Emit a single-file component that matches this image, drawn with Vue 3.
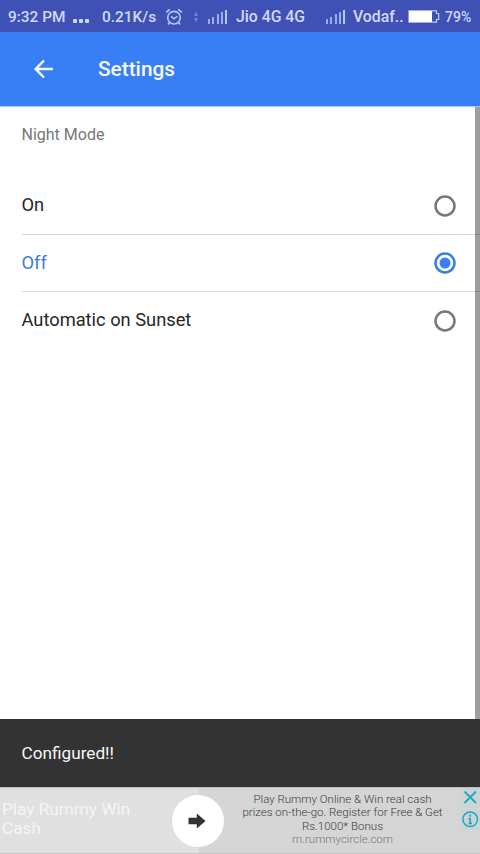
<script setup>
import { ref } from 'vue'

const options = ['On', 'Off', 'Automatic on Sunset']
const selected = ref('Off')
const bars = [5, 7, 10, 12, 14]
</script>

<template>
  <div class="screen">
    <div class="status">
      <span class="time">9:32 PM</span>
      <span class="dots"><i></i><i></i><i></i></span>
      <span class="speed">0.21K/s</span>
      <svg class="alarm" width="18" height="18" viewBox="0 0 18 18" fill="none" stroke="#b9c5f3">
        <circle cx="9" cy="9.7" r="6.3" stroke-width="1.6" />
        <path d="M1.2 4.4 4.8 1.3M13.2 1.3l3.6 3.1M4.5 14.5 3 16.5M13.5 14.5l1.5 2" stroke-width="1.7" />
        <path d="m6.2 8.4 2.8 2.5 3.3-2.5" stroke-width="1.5" />
      </svg>
      <svg class="data" width="6" height="14" viewBox="0 0 6 14" fill="#7582d5">
        <path d="M3 1.500 5 6H1zM3 12.500 1 8h4z" />
      </svg>
      <span class="signal"><i v-for="h in bars" :key="h" :style="{ height: h + 'px' }"></i></span>
      <span class="carrier">Jio 4G 4G</span>
      <span class="signal"><i v-for="h in bars" :key="h" :style="{ height: h + 'px' }"></i></span>
      <span class="carrier-two">Vodaf..</span>
      <svg class="battery" width="32" height="13" viewBox="0 0 32 13">
        <path d="M1 .8h27.500v2.700h2.200v6h-2.200v2.700H1z" fill="none" stroke="#c2cdf7" stroke-width="1.2" />
        <path d="M1 1h23v11H1z" fill="#fff" />
      </svg>
      <span class="percent">79%</span>
    </div>
    <header class="toolbar">
      <svg width="20" height="20" viewBox="0 0 20 20" fill="none" stroke="#f5f9ff" stroke-width="2.500">
        <path d="M19 10H2.500M10 1.500 1.700 10l8.300 8.500" />
      </svg>
      <h1>Settings</h1>
    </header>
    <main class="content">
      <div class="panel">
        <h2>Night Mode</h2>
        <div
          v-for="option in options"
          :key="option"
          class="option"
          :class="{ active: option === selected }"
          @click="selected = option"
        >
          <span>{{ option }}</span>
          <svg class="radio" width="22" height="22" viewBox="0 0 22 22">
            <circle class="ring" cx="11" cy="11" r="9.500" />
            <circle v-if="option === selected" class="dot" cx="11" cy="11" r="5.500" />
          </svg>
        </div>
      </div>
      <div class="scrollbar"></div>
    </main>
    <div class="toast">Configured!!</div>
    <div class="ad">
      <div class="ad-title">Play Rummy Win<br />Cash</div>
      <div class="ad-go">
        <svg width="18" height="16" viewBox="0 0 18 16" fill="#333"><path d="M.5 4.700h8.300V.5L17.500 8l-8.700 7.500v-4.200H.5z" /></svg>
      </div>
      <div class="ad-copy">
        <div>Play Rummy Online &amp; Win real cash</div>
        <div>prizes on-the-go. Register for Free &amp; Get</div>
        <div>Rs.1000* Bonus</div>
        <div class="url">m.rummycircle.com</div>
      </div>
      <div class="ad-controls">
        <svg width="19" height="20" viewBox="0 0 19 20" fill="none" stroke="#20a8b8" stroke-width="1.800"><path d="m3.500 3.500 11.500 11.500M15 3.500 3.500 15" /></svg>
        <svg width="19" height="20" viewBox="0 0 19 20" fill="none" stroke="#20a8b8">
          <circle cx="9.200" cy="9.300" r="7.300" stroke-width="1.500" />
          <path d="M9.200 4.500v2.200M9.200 8v6M7.500 8.500h1.700M7.500 13.500h3.600" stroke-width="1.700" />
        </svg>
      </div>
    </div>
  </div>
</template>

<style>
body {
  margin: 0;
  overflow: hidden;
}
</style>

<style scoped>
.screen {
  width: 480px;
  height: 854px;
  display: flex;
  flex-direction: column;
  background: #fff;
  font-family: Roboto, "Liberation Sans", sans-serif;
}
.status {
  height: 32px;
  box-sizing: border-box;
  padding-left: 8px;
  display: grid;
  grid-template-columns: 65px 29px 62.500px 28.500px 15px 28px 90px 27px 55px 37px auto;
  align-items: center;
  background: #3f51b5;
  color: #d1d9fb;
  font-size: 15.800px;
  font-weight: 500;
  line-height: 32px;
  white-space: nowrap;
}
.status > span { padding-top: 1px; }
.time, .speed { font-size: 15.400px; }
.status > .dots { display: flex; gap: 2px; padding-top: 8px; }
.dots i { width: 4px; height: 4px; border-radius: 1px; background: #d1d9fb; }
.status > .signal { display: flex; align-items: flex-end; gap: 2.300px; height: 14px; padding-top: 0; }
.signal i { width: 2px; background: #9eacea; }
.signal i:last-child { background: #b9c5f4; }
.percent { font-size: 14px; }
.toolbar {
  height: 74px;
  box-sizing: border-box;
  padding-left: 34px;
  display: flex;
  align-items: center;
  background: #387ef5;
}
.toolbar svg { margin-bottom: 1px; }
.toolbar h1 {
  margin: 0 0 0 44px;
  color: #f5f9ff;
  font-size: 20.800px;
  font-weight: 500;
  line-height: 28px;
}
.content { flex: 1; display: flex; position: relative; border-top: 1px solid #a9c6f5; box-sizing: border-box; }
.panel { flex: 1; padding-left: 21.500px; }
.panel h2 {
  margin: 16px 0 30px;
  color: #777;
  font-size: 16px;
  font-weight: 400;
  line-height: 24px;
}
.option {
  height: 57.500px;
  box-sizing: border-box;
  padding: 0 24px 1px 0;
  display: flex;
  align-items: center;
  justify-content: space-between;
  border-bottom: 1px solid #d8d8d8;
  color: #262626;
  font-size: 18.300px;
}
.option:last-child { border-bottom-color: transparent; }
.option.active { color: #3c7edb; }
.radio { margin-top: 2px; }
.ring { fill: none; stroke: #777; stroke-width: 2.500px; }
.active .ring { stroke: #387edf; }
.dot { fill: #387ef5; }
.scrollbar { position: absolute; right: 0; top: 0; bottom: 0; width: 5px; background: rgba(0, 0, 0, 0.38); }
.toast {
  height: 68px;
  padding-left: 21.500px;
  background: #333;
  color: #f7f7f7;
  font-size: 17.200px;
  line-height: 68px;
}
.ad {
  height: 67px;
  box-sizing: border-box;
  display: grid;
  grid-template-columns: 172px 52px 237px 19px;
  background: linear-gradient(90deg, #e0e0e0 0 199px, #d5d5d5 199px);
  border-top: 1px solid #bbb;
  border-bottom: 1px solid #c5c5c5;
}
.ad-title { padding: 12px 0 0 2px; color: #f5f5f5; font-size: 17.200px; line-height: 18.500px; }
.ad-go {
  width: 52px;
  height: 52px;
  margin-top: 7px;
  border-radius: 50%;
  background: #fff;
  display: grid;
  place-items: center;
}
.ad-go svg { margin-right: 2px; }
.ad-copy {
  padding: 5px 0 0;
  color: #3c3c3c;
  font-size: 11.500px;
  font-weight: 300;
  line-height: 13.400px;
  text-align: center;
  white-space: nowrap;
}
.url { color: #777; }
.ad-controls { display: flex; flex-direction: column; gap: 2px; }
.ad-controls svg { background: #cbd4d6; display: block; }
</style>
